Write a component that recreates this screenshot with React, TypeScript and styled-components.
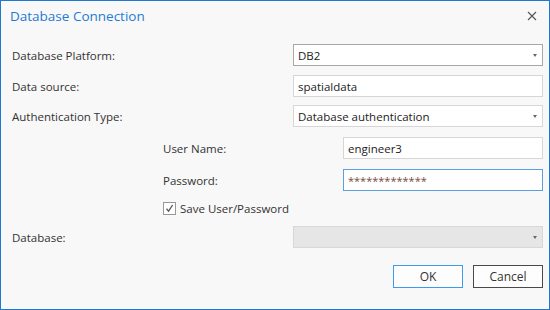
import React from "react";
import styled, { createGlobalStyle } from "styled-components";

const GlobalStyle = createGlobalStyle`
  html, body {
    margin: 0;
    padding: 0;
    background: #f8f8f8;
  }
  * {
    box-sizing: border-box;
  }
`;

const colors = {
  Frame: "#1e78d0",
  Title: "#1f7bd4",
  Bg: "#f8f8f8",
  Text: "#333333",
  Border: "#d6d6d6",
  BorderDark: "#a8a8a8",
  Focus: "#5a9fe0",
  Disabled: "#e6e6e6",
};

const WindowS = styled.div`
  width: 550px;
  height: 310px;
  border: 1px solid ${colors.Frame};
  background: ${colors.Bg};
  display: flex;
  flex-direction: column;
  font-family: "Open Sans", "Noto Sans", sans-serif;
  font-size: 11.5px;
  color: ${colors.Text};
`;

const TitleBarS = styled.div`
  height: 30px;
  padding: 0 12px 0 9px;
  display: flex;
  align-items: center;
  justify-content: space-between;
`;

const TitleS = styled.div`
  font-size: 13.5px;
  color: ${colors.Title};
`;

const CloseS = styled.div`
  width: 10px;
  height: 10px;
  display: flex;
`;

const FormS = styled.div`
  padding: 13px 6px 0 11px;
  display: flex;
  flex-direction: column;
`;

const RowS = styled.div<{ $top?: number; $indent?: number }>`
  display: flex;
  align-items: center;
  height: 22px;
  margin-top: ${(p) => p.$top ?? 0}px;
  padding-left: ${(p) => p.$indent ?? 0}px;
`;

const LabelS = styled.div`
  flex: 1;
  white-space: nowrap;
`;

const FieldS = styled.div<{ $width: number; $variant?: "plain" | "strong" | "focus" | "disabled" }>`
  width: ${(p) => p.$width}px;
  height: 22px;
  position: relative;
  display: flex;
  align-items: center;
  padding: 0 4px;
  border: 1px solid
    ${(p) =>
      p.$variant === "strong"
        ? colors.BorderDark
        : p.$variant === "focus"
        ? colors.Focus
        : p.$variant === "disabled"
        ? "#d8d8d8"
        : colors.Border};
  background: ${(p) => (p.$variant === "disabled" ? colors.Disabled : "#ffffff")};
  color: #222;
  font-size: 11.5px;
`;

const ArrowS = styled.div`
  position: absolute;
  right: 5px;
  top: 9px;
  width: 0;
  height: 0;
  border-left: 2.5px solid transparent;
  border-right: 2.5px solid transparent;
  border-top: 3px solid #666;
`;

const SecretS = styled.span`
  color: #7a4a42;
  font-size: 11px;
`;

const CheckRowS = styled.label`
  display: flex;
  align-items: center;
  gap: 4px;
  height: 13px;
  margin-top: 11px;
  padding-left: 151px;
`;

const CheckBoxS = styled.div`
  width: 13px;
  height: 13px;
  border: 1px solid #999;
  background: #fff;
  display: flex;
  align-items: center;
  justify-content: center;
`;

const ButtonBarS = styled.div`
  display: flex;
  justify-content: flex-end;
  gap: 10px;
  margin-top: 17px;
`;

const ButtonS = styled.button<{ $primary?: boolean }>`
  width: 70px;
  height: 23px;
  border: 1px solid ${(p) => (p.$primary ? "#3b9bef" : "#4a4a4a")};
  background: #fdfdfd;
  font-family: inherit;
  font-size: 12px;
  color: #333;
  padding: 0;
`;

const Select = ({ width, value, variant }: { width: number; value?: string; variant?: "plain" | "strong" | "disabled" }) => (
  <FieldS $width={width} $variant={variant}>
    {value}
    <ArrowS />
  </FieldS>
);

export default function App() {
  return (
    <>
      <GlobalStyle />
      <WindowS>
        <TitleBarS>
          <TitleS>Database Connection</TitleS>
          <CloseS>
            <svg width="10" height="10" viewBox="0 0 10 10">
              <path d="M1 1 L9 9 M9 1 L1 9" stroke="#555" strokeWidth="1.1" />
            </svg>
          </CloseS>
        </TitleBarS>
        <FormS>
          <RowS>
            <LabelS>Database Platform:</LabelS>
            <Select width={250} value="DB2" variant="strong" />
          </RowS>
          <RowS $top={9}>
            <LabelS>Data source:</LabelS>
            <FieldS $width={250}>spatialdata</FieldS>
          </RowS>
          <RowS $top={8}>
            <LabelS>Authentication Type:</LabelS>
            <Select width={250} value="Database authentication" />
          </RowS>
          <RowS $top={10} $indent={151}>
            <LabelS>User Name:</LabelS>
            <FieldS $width={200}>engineer3</FieldS>
          </RowS>
          <RowS $top={10} $indent={151}>
            <LabelS>Password:</LabelS>
            <FieldS $width={200} $variant="focus">
              <SecretS>*************</SecretS>
            </FieldS>
          </RowS>
          <CheckRowS>
            <CheckBoxS>
              <svg width="9" height="9" viewBox="0 0 9 9">
                <path d="M1.5 4.8 L3.6 7.2 L7.6 1" fill="none" stroke="#555" strokeWidth="1.3" />
              </svg>
            </CheckBoxS>
            Save User/Password
          </CheckRowS>
          <RowS $top={11}>
            <LabelS>Database:</LabelS>
            <Select width={250} variant="disabled" />
          </RowS>
          <ButtonBarS>
            <ButtonS $primary>OK</ButtonS>
            <ButtonS>Cancel</ButtonS>
          </ButtonBarS>
        </FormS>
      </WindowS>
    </>
  );
}
